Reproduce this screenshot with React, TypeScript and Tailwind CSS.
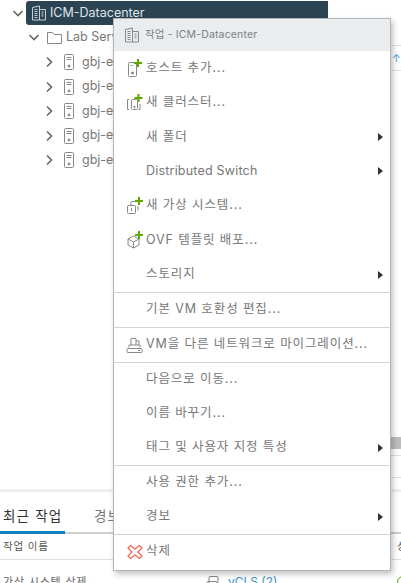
import React from 'react';

const green = '#5fa800';

const Plus = ({ x, y }: { x: number; y: number }) => (
    <path d={`M${x} ${y - 4}v8M${x - 4} ${y}h8`} stroke={green} strokeWidth="2" fill="none" />
);

const Chevron = ({ open }: { open?: boolean }) => (
    <svg width="12" height="12" viewBox="0 0 12 12" fill="none" stroke="#666" strokeWidth="1.6">
        {open ? <path d="M1.5 4l4.5 4.5L10.5 4" /> : <path d="M4 1.5L8.5 6 4 10.5" />}
    </svg>
);

const BuildingIcon = ({ color = '#888' }: { color?: string }) => (
    <svg width="16" height="16" viewBox="0 0 16 16" fill="none" stroke={color} strokeWidth="1">
        <path d="M1.5 2.5l7-1.5v14h-7zM8.5 4.5h6v10.5h-6z" />
        <path d="M3.5 4.5h3M3.5 6.5h3M3.5 8.5h3M3.5 10.5h3M3.5 12.5h3M10.5 7h2M10.5 9h2M10.5 11h2" />
    </svg>
);

const ServerIcon = () => (
    <svg width="10" height="16" viewBox="0 0 10 16" fill="none" stroke="#888">
        <rect x="0.5" y="0.5" width="9" height="15" rx="1" />
        <path d="M2.5 3.5h5M2.5 5.5h5" />
        <circle cx="5" cy="12" r="1" fill="#666" />
    </svg>
);

const HostAddIcon = () => (
    <svg width="18" height="18" viewBox="0 0 18 18" fill="none" stroke="#888">
        <rect x="2.5" y="3.5" width="8" height="14" rx="1" />
        <circle cx="6.5" cy="14" r="1" fill="#666" />
        <path d="M4.5 6.5h2" />
        <Plus x={12} y={4} />
    </svg>
);

const ClusterAddIcon = () => (
    <svg width="18" height="18" viewBox="0 0 18 18" fill="none" stroke="#888">
        <path d="M3 5.5H1.5v10H3M14 10v5.5h-1.5" />
        <rect x="5.5" y="5.5" width="6" height="10" rx="1" />
        <circle cx="8.5" cy="13" r="0.7" fill="#666" />
        <Plus x={12.5} y={4} />
    </svg>
);

const VmAddIcon = () => (
    <svg width="18" height="18" viewBox="0 0 18 18" fill="none" stroke="#888">
        <path d="M5 8V5.5a1 1 0 011-1h4M12 9v4.5" />
        <rect x="1.5" y="8.5" width="8" height="8" rx="1" />
        <path d="M5.5 11v3" />
        <Plus x={13} y={4} />
    </svg>
);

const OvfAddIcon = () => (
    <svg width="18" height="18" viewBox="0 0 18 18" fill="none" stroke="#888">
        <path d="M2 8l5.500-3 5.500 3v6l-5.500 3-5.500-3zM2 8l5.500 3 5.500-3M7.500 11v6" />
        <Plus x={13} y={4} />
    </svg>
);

const MigrateIcon = () => (
    <svg width="18" height="18" viewBox="0 0 18 18" fill="none" stroke="#888">
        <path d="M5 9V2.500h5V9M10 5h3v4" />
        <path d="M3 11.500V9h11v2.500" />
        <rect x="1" y="12.500" width="15" height="4" rx="1" />
        <path d="M12 14.500h2" />
    </svg>
);

const DeleteIcon = () => (
    <svg width="16" height="16" viewBox="0 0 16 16" fill="none" stroke="#f0604a" strokeWidth="1.200">
        <path d="M3.500 1.500L8 5l4.500-3.500 2.500 2.500L11 8l4 4-2.500 2.500L8 11l-4.500 3.500L1 12l4-4-4-4z" />
    </svg>
);

interface MenuRow {
    label?: string;
    icon?: React.ReactNode;
    arrow?: boolean;
    divider?: boolean;
    tall?: boolean;
    latin?: boolean;
}

const rows: MenuRow[] = [
    { label: '호스트 추가...', icon: <HostAddIcon />, tall: true },
    { label: '새 클러스터...', icon: <ClusterAddIcon />, tall: true },
    { label: '새 폴더', arrow: true, tall: true },
    { label: 'Distributed Switch', arrow: true, tall: true, latin: true },
    { label: '새 가상 시스템...', icon: <VmAddIcon />, tall: true },
    { label: 'OVF 템플릿 배포...', icon: <OvfAddIcon />, tall: true },
    { label: '스토리지', arrow: true, tall: true },
    { divider: true },
    { label: '기본 VM 호환성 편집...' },
    { divider: true },
    { label: 'VM을 다른 네트워크로 마이그레이션...', icon: <MigrateIcon /> },
    { divider: true },
    { label: '다음으로 이동...' },
    { label: '이름 바꾸기...' },
    { label: '태그 및 사용자 지정 특성', arrow: true },
    { divider: true },
    { label: '사용 권한 추가...' },
    { label: '경보', arrow: true },
    { divider: true },
    { label: '삭제', icon: <DeleteIcon /> },
];

const ContextMenu = () => (
    <div className="absolute left-[113px] top-[18px] w-[278px] h-[553px] bg-white border border-[#b5b5b5] shadow-[2px_3px_6px_rgba(0,0,0,0.25)] text-[#777] text-[12.500px]">
        <div className="h-[32px] bg-[#e9edf0] flex items-center pl-[10px] gap-[5px] text-[10.500px] text-[#808080] tracking-[0.150px]">
            <BuildingIcon />
            <span>작업 - ICM-Datacenter</span>
        </div>
        {rows.map((row, i) =>
            row.divider ? (
                <div key={i} className="h-px bg-[#d4d4d4]" />
            ) : (
                <div key={i} className={`${row.tall ? 'h-[34.400px]' : 'h-[34px]'} flex items-center pl-[5px] pr-[7px]`}>
                    <div className="w-[27px] flex justify-center shrink-0 pl-[4px]">{row.icon}</div>
                    <span className={`flex-1 whitespace-nowrap ${row.latin ? 'tracking-[0.200px]' : 'tracking-[0.900px]'}`}>{row.label}</span>
                    {row.arrow && <div className="w-0 h-0 border-y-[4px] border-y-transparent border-l-[5px] border-l-[#333]" />}
                </div>
            )
        )}
    </div>
);

const TreeRow = ({ name }: { name: string }) => (
    <div className="h-[24.500px] flex items-center pl-[43px] gap-[9px] text-[#777]">
        <Chevron />
        <ServerIcon />
        <span className="-ml-[1px]">{name}</span>
    </div>
);

export default function App() {
    return (
        <div
            className="relative w-[401px] h-[583px] overflow-hidden bg-white text-[12.500px] flex flex-col"
            style={{ fontFamily: 'Inter, "Noto Sans CJK KR", sans-serif' }}
        >
            <div className="h-[489px] flex shrink-0">
                <div className="flex-1 pt-[1px]">
                    <div className="flex items-center">
                        <div className="w-[26px] flex justify-center pl-[10px]"><Chevron open /></div>
                        <div className="w-[302px] h-[24px] bg-[#2b4454] rounded-l-[3px] flex items-center pl-[5px] gap-[3px]">
                            <BuildingIcon color="#c8d0d6" />
                            <span className="text-[#dfe5e9]">ICM-Datacenter</span>
                        </div>
                    </div>
                    <div className="h-[24px] flex items-center pl-[28px] gap-[4px] text-[#777]">
                        <Chevron open />
                        <svg className="ml-[3px]" width="15" height="13" viewBox="0 0 15 13" fill="none" stroke="#888"><path d="M0.500 12.500V1.500h5l1.500 2h7.500v9z" /></svg>
                        <span>Lab Server</span>
                    </div>
                    <div className="mt-[1px]">
                        <TreeRow name="gbj-esxi01" />
                        <TreeRow name="gbj-esxi02" />
                        <TreeRow name="gbj-esxi03" />
                        <TreeRow name="gbj-esxi04" />
                        <TreeRow name="gbj-esxi05" />
                    </div>
                </div>
                <div className="w-[11px] shrink-0 flex flex-col">
                    <div className="mt-[45px] h-[26px] border-y border-[#e0e0e0] flex items-center text-[#4a9fd8] text-[11px] justify-end">↑</div>
                    <div className="mt-[366px] h-[12px] bg-[#bdbdbd]" />
                    <div className="mt-[6px] h-px bg-[#e0e0e0]" />
                    <div className="mt-[21px] h-px bg-[#e0e0e0]" />
                </div>
            </div>
            <div className="h-[3px] bg-[#eeeeee] shrink-0" />
            <div className="h-[42px] flex items-end border-b-[2px] border-[#cfcfcf] shrink-0">
                <div className="w-[65px] h-[32px] -mb-[2px] pl-[3px] pt-[4px] border-b-[3px] border-[#0f7fbe] text-[#333] text-[13.500px] tracking-[1.200px] whitespace-nowrap">최근 작업</div>
                <div className="h-[30px] ml-[29px] pt-[4px] text-[#777] text-[13.500px] tracking-[1.200px]">경보</div>
            </div>
            <div className="h-[26px] flex items-center pl-[3px] border-b border-[#e0e0e0] text-[10.500px] text-[#555] tracking-[0.800px] shrink-0 whitespace-nowrap">
                <span className="w-[394px] shrink-0">작업 이름</span>
                <span>상태</span>
            </div>
            <div className="flex items-center pl-[3px] pt-[13px] text-[11px] text-[#666] whitespace-nowrap">
                <span className="w-[203px] shrink-0 tracking-[0.800px]">가상 시스템 삭제</span>
                <svg className="shrink-0" width="16" height="14" viewBox="0 0 16 14" fill="none" stroke="#888"><rect x="3" y="1.500" width="9" height="9" rx="1" /><rect x="1" y="6.500" width="10" height="7" rx="1" /></svg>
                <span className="ml-[6px] w-[169px] shrink-0 text-[#3f8fc4] text-[12px]">vCLS (2)</span>
                <span className="w-[12px] h-[12px] rounded-full border border-[#5fa800] shrink-0" />
            </div>
            <ContextMenu />
        </div>
    );
}
